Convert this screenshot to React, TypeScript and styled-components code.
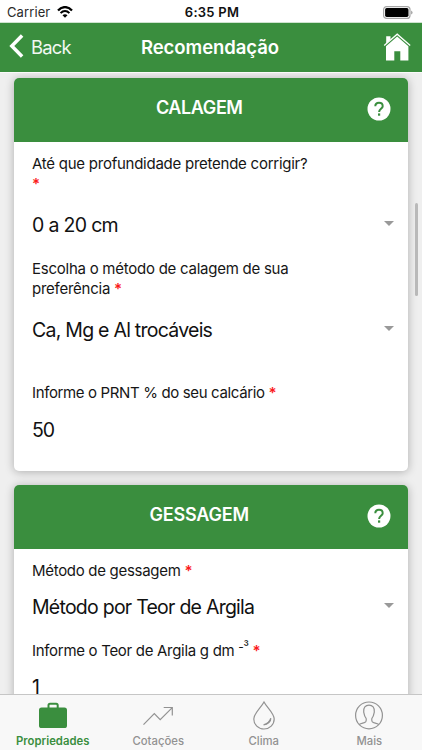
import React from "react";
import styled, { createGlobalStyle } from "styled-components";

const GREEN = "#3a8e3e";

const GlobalStyle = createGlobalStyle`
  *, *::before, *::after { box-sizing: border-box; }
  html, body { margin: 0; padding: 0; overflow: hidden; }
  body { font-family: Inter, "Liberation Sans", sans-serif; color: #161616; }
`;

const Screen = styled.div`
  display: flex;
  flex-direction: column;
  width: 422px;
  height: 750px;
  overflow: hidden;
  background: #efefef;
`;

const StatusBar = styled.header`
  display: grid;
  grid-template-columns: 1fr auto 1fr;
  align-items: center;
  flex: none;
  height: 23px;
  padding: 1px 6px 0 8px;
  background: #fff;
  font-size: 13px;
  line-height: 16px;
`;

const Carrier = styled.div`
  display: flex;
  align-items: center;
  gap: 7px;
  margin-left: -1px;
  color: #2a2a2a;
  letter-spacing: 0.1px;
`;

const Clock = styled.div`
  font-weight: 600;
  letter-spacing: 0.25px;
  color: #111;
`;

const BatterySlot = styled.div`
  display: flex;
  justify-content: flex-end;
  padding-right: 3px;
`;

const NavBar = styled.nav`
  position: relative;
  z-index: 1;
  display: grid;
  grid-template-columns: 1fr auto 1fr;
  align-items: center;
  flex: none;
  height: 49px;
  padding: 0 11px 1px 9px;
  background: ${GREEN};
  color: #fff;
  box-shadow: 0 1px 0 #fafafa, 0 -1px 0 rgba(58, 142, 62, 0.25);
`;

const BackButton = styled.button`
  display: flex;
  align-items: center;
  gap: 7px;
  padding: 0;
  border: 0;
  background: none;
  color: #f2f8f2;
  font: 400 18.4px/24px Inter, sans-serif;
  letter-spacing: -0.8px;

  svg { margin-bottom: 2px; }
`;

const NavTitle = styled.h1`
  margin: 0;
  font-size: 18.5px;
  font-weight: 600;
  line-height: 24px;
  letter-spacing: -0.05px;
`;

const HomeButton = styled.button`
  display: flex;
  justify-self: end;
  padding: 0;
  border: 0;
  background: none;
  color: #fff;
`;

const Content = styled.main`
  position: relative;
  display: flex;
  flex-direction: column;
  gap: 14px;
  flex: 1;
  min-height: 0;
  padding: 6px 14px 0;
  overflow: hidden;
`;

const ScrollThumb = styled.div`
  position: absolute;
  top: 131px;
  right: 4px;
  width: 3px;
  height: 93px;
  border-radius: 2px;
  background: #b9b9b9;
`;

const Card = styled.section`
  flex: none;
  border-radius: 5px;
  background: #fff;
  box-shadow: 0 1px 10px rgba(0, 0, 0, 0.28);
`;

const CardHeader = styled.header`
  display: grid;
  grid-template-columns: 1fr 24px;
  align-items: center;
  height: 64px;
  padding: 0 17.5px 2px 18px;
  border-radius: 5px 5px 0 0;
  background: ${GREEN};
  color: #fff;
`;

const CardTitle = styled.h2<{ $spacing: number }>`
  margin: 0 0 2px;
  font-size: 18px;
  font-weight: 600;
  line-height: 24px;
  text-align: center;
  letter-spacing: ${(p) => p.$spacing}px;
`;

const CardBody = styled.div`
  display: flex;
  flex-direction: column;
  padding: 12px 14px 26px 18px;
`;

const Field = styled.div<{ $before?: number }>`
  display: flex;
  flex-direction: column;
  margin-top: ${(p) => p.$before ?? 0}px;
`;

const Label = styled.label<{ $spacing: number }>`
  max-width: 282px;
  font-size: 15px;
  line-height: 20px;
  letter-spacing: ${(p) => p.$spacing}px;
`;

const Required = styled.span`
  color: #fb1a1a;
  font-weight: 600;
`;

const Exponent = styled.sup`
  font-size: 12px;
  line-height: 0;
  vertical-align: 5px;
  letter-spacing: -0.3px;
`;

const Value = styled.div<{ $gap: number; $spacing: number }>`
  display: flex;
  align-items: center;
  justify-content: space-between;
  height: 30px;
  margin-top: ${(p) => p.$gap}px;
  font-size: 19.5px;
  letter-spacing: ${(p) => p.$spacing}px;
  color: #111;
`;

const Caret = styled.span`
  width: 0;
  height: 0;
  margin-bottom: 4px;
  border: 5.5px solid transparent;
  border-top-color: #999;
  border-bottom: 0;
`;

const TabBar = styled.footer`
  display: grid;
  grid-template-columns: repeat(4, 1fr);
  position: relative;
  flex: none;
  height: 56px;
  border-top: 1px solid #c6c6c6;
  background: #f8f8f8;
`;

const Tab = styled.button<{ $active?: boolean }>`
  display: flex;
  flex-direction: column;
  align-items: center;
  gap: 2px;
  padding: 5px 0 0;
  border: 0;
  background: none;
  color: ${(p) => (p.$active ? GREEN : "#929292")};
  font: ${(p) => (p.$active ? 600 : 500)} 11.3px/18px Inter, sans-serif;
  letter-spacing: 0.02px;

  svg { display: block; }
`;

const WifiIcon = () => (
  <svg width="16" height="12" viewBox="0 0 16 12" fill="none" stroke="#000">
    <path d="M1 4.4C5-.1 11-.1 15 4.4" strokeWidth="2.2" />
    <path d="M3.6 7.1c2.6-2.8 6.2-2.8 8.8 0" strokeWidth="2" />
    <path d="M8 11.8 5.5 9.2c1.5-1.3 3.5-1.3 5 0Z" fill="#000" stroke="none" />
  </svg>
);

const BatteryIcon = () => (
  <svg width="30" height="13" viewBox="0 0 30 13">
    <rect x=".6" y=".6" width="26.4" height="11.8" rx="3" fill="#fff" stroke="#a6a6a6" strokeWidth="1.2" />
    <rect x="2.1" y="2.1" width="23.4" height="8.8" rx="1.6" fill="#000" />
    <path d="M28.2 4.4c1.8.8 1.8 3.4 0 4.2Z" fill="#999" />
  </svg>
);

const BackIcon = () => (
  <svg width="15" height="24" viewBox="0 0 15 24" fill="none" stroke="#fff" strokeWidth="3.5">
    <path d="M13.1 1.6 2.8 12.1l10.3 10.5" />
  </svg>
);

const HomeIcon = () => (
  <svg width="28" height="28" viewBox="0 0 28 28" fill="currentColor">
    <path d="M3.2 3.2h4.3v3.2L3.2 10.4Z" />
    <path d="M1.2 12.6 14.2 1.2l13 11.4" fill="none" stroke="currentColor" strokeWidth="1.3" />
    <path d="M3 13.3 14.2 3.5l11.2 9.8v14.2h-8.1v-9.2h-6v9.2H3Z" />
  </svg>
);

const HelpIcon = () => (
  <svg width="24" height="24" viewBox="0 0 24 24">
    <circle cx="12" cy="12" r="11.5" fill="#fff" />
    <path d="M8.3 9.3C8.3 7 9.8 5.8 12 5.8s3.7 1.3 3.7 3.4c0 2.5-3.6 2.9-3.6 5.8" fill="none" stroke={GREEN} strokeWidth="2" />
    <rect x="11" y="16.4" width="2.2" height="2.3" fill={GREEN} />
  </svg>
);

const BriefcaseIcon = () => (
  <svg width="28" height="30" viewBox="0 0 28 30">
    <path d="M9.5 8V5.2c0-1 .5-1.5 1.5-1.5h6.2c1 0 1.5.5 1.5 1.5V8" fill="none" stroke="currentColor" strokeWidth="2" />
    <rect y="7.4" width="28" height="20.6" rx="2.6" fill="currentColor" />
  </svg>
);

const TrendIcon = () => (
  <svg width="30" height="30" viewBox="0 0 30 30" fill="none" stroke="currentColor" strokeWidth="1.2">
    <path d="M.5 24.7 11.3 13.5l5.9 6.1L29 7.8M20.7 7.5h8.6v8" />
  </svg>
);

const DropIcon = () => (
  <svg width="24" height="30" viewBox="0 0 24 30" fill="none" stroke="currentColor" strokeWidth="1.2">
    <path d="M12 2C9.2 7.4 1.8 13.4 1.8 19a10.2 10 0 0 0 20.4 0C22.2 13.4 14.8 7.4 12 2Z" />
    <path d="M18.8 18.2c.2 3.2-3 6.4-7.2 6.6 3.6-1 6.2-3.4 7.2-6.6Z" fill="currentColor" />
  </svg>
);

const ProfileIcon = () => (
  <svg width="30" height="30" viewBox="0 0 30 30" fill="none" stroke="currentColor" strokeWidth="1.2">
    <circle cx="15" cy="15.4" r="13.4" />
    <path d="M5.2 24.4c2.4-1.6 5.4-1.2 6.6-2.8.6-1 .6-2.3.3-3.3-1.5-1.7-2-3.8-2.4-6.2-.5-4.4 1.8-7 5.3-7s5.8 2.6 5.3 7c-.4 2.4-.9 4.5-2.4 6.2-.3 1-.3 2.3.3 3.3 1.2 1.6 4.2 1.2 6.6 2.8" />
  </svg>
);

export default function App() {
  return (
    <>
      <GlobalStyle />
      <Screen>
        <StatusBar>
          <Carrier>Carrier <WifiIcon /></Carrier>
          <Clock>6:35 PM</Clock>
          <BatterySlot><BatteryIcon /></BatterySlot>
        </StatusBar>
        <NavBar>
          <BackButton><BackIcon />Back</BackButton>
          <NavTitle>Recomendação</NavTitle>
          <HomeButton aria-label="Home"><HomeIcon /></HomeButton>
        </NavBar>
        <Content>
          <Card>
            <CardHeader>
              <CardTitle $spacing={-0.4}>CALAGEM</CardTitle>
              <HelpIcon />
            </CardHeader>
            <CardBody>
              <Field>
                <Label $spacing={-0.25}>Até que profundidade pretende corrigir? <Required>*</Required></Label>
                <Value $gap={16} $spacing={-0.68}>0 a 20 cm<Caret /></Value>
              </Field>
              <Field $before={19}>
                <Label $spacing={-0.25}>Escolha o método de calagem de sua preferência <Required>*</Required></Label>
                <Value $gap={16} $spacing={-0.75}>Ca, Mg e Al trocáveis<Caret /></Value>
              </Field>
              <Field $before={38}>
                <Label $spacing={-0.36}>Informe o PRNT % do seu calcário <Required>*</Required></Label>
                <Value $gap={12} $spacing={-1}>50</Value>
              </Field>
            </CardBody>
          </Card>
          <Card>
            <CardHeader>
              <CardTitle $spacing={-0.2}>GESSAGEM</CardTitle>
              <HelpIcon />
            </CardHeader>
            <CardBody>
              <Field>
                <Label $spacing={-0.3}>Método de gessagem <Required>*</Required></Label>
                <Value $gap={11} $spacing={-0.75}>Método por Teor de Argila<Caret /></Value>
              </Field>
              <Field $before={19}>
                <Label $spacing={-0.3}>Informe o Teor de Argila g dm <Exponent>-³</Exponent> <Required>*</Required></Label>
                <Value $gap={11} $spacing={-0.7}>1</Value>
              </Field>
            </CardBody>
          </Card>
          <ScrollThumb />
        </Content>
        <TabBar>
          <Tab $active><BriefcaseIcon />Propriedades</Tab>
          <Tab><TrendIcon />Cotações</Tab>
          <Tab><DropIcon />Clima</Tab>
          <Tab><ProfileIcon />Mais</Tab>
        </TabBar>
      </Screen>
    </>
  );
}
